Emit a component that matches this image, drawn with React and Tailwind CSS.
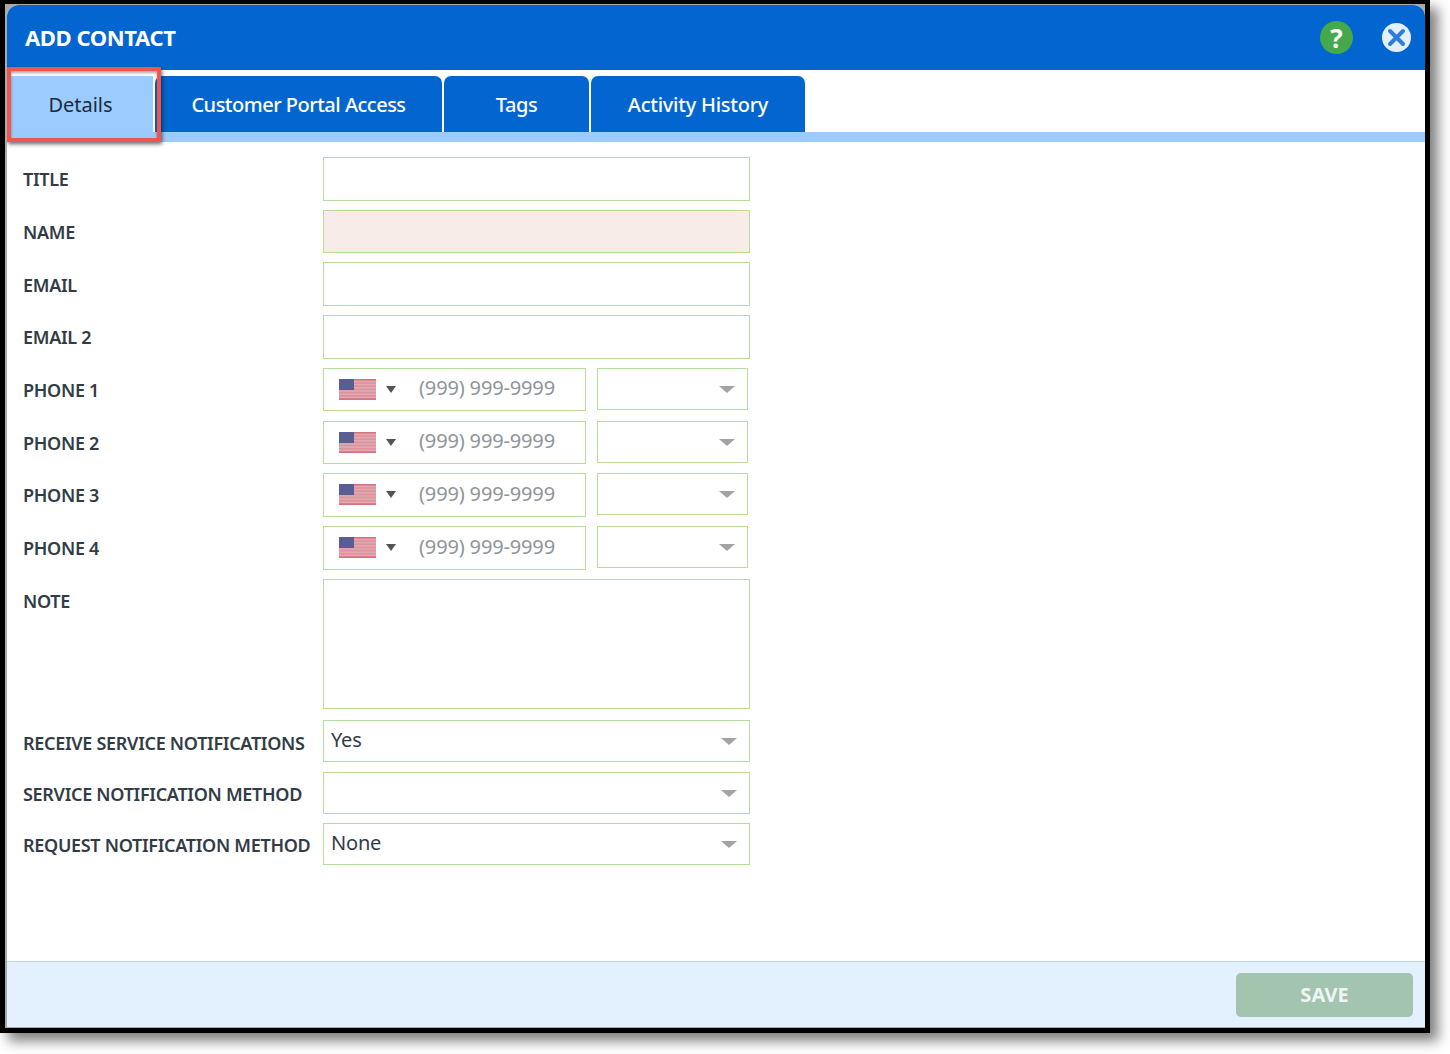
const font = "font-['Noto_Sans',sans-serif]";

function Flag() {
  return (
    <svg width="37" height="21" viewBox="0 0 37 21" className="shrink-0">
      <rect width="37" height="21" fill="#e3a8b0" />
      <rect y="0" width="37" height="1.6" fill="#d5737f" />
      <rect y="3.2" width="37" height="1.6" fill="#dc939d" />
      <rect y="6.4" width="37" height="1.6" fill="#dc939d" />
      <rect y="9.6" width="37" height="1.6" fill="#dc939d" />
      <rect y="12.8" width="37" height="1.6" fill="#dc939d" />
      <rect y="16" width="37" height="1.6" fill="#dc939d" />
      <rect y="19.2" width="37" height="1.8" fill="#d5737f" />
      <rect width="15" height="11" fill="#5a5d92" />
    </svg>
  );
}

function Caret() {
  return <span className="w-0 h-0 border-x-[8px] border-x-transparent border-t-[7px] border-t-[#a3a3a3]" />;
}

function Row({ label, height, gap, labelTop, children }) {
  return (
    <div className={`flex ${height} ${gap}`}>
      <div className={`w-[316px] shrink-0 pl-4 ${labelTop || "pt-[10px]"} text-[18px] leading-[24px] font-semibold text-[#323c46] whitespace-nowrap tracking-[-0.3px]`}>{label}</div>
      {children}
    </div>
  );
}

function TextBox({ className }) {
  return <div className={`w-[427px] h-full border border-[#b5dd9c] ${className || "bg-white"}`} />;
}

function PhoneRow({ label, gap, boxHeight }) {
  return (
    <Row label={label} height="h-[44px]" gap={gap}>
      <div className="flex items-start">
        <div className={`w-[263px] ${boxHeight} border border-[#b5dd9c] flex items-center pl-[15px] pb-[1px]`}>
          <Flag />
          <span className="ml-[10px] w-0 h-0 border-x-[5px] border-x-transparent border-t-[7px] border-t-[#555555]" />
          <span className="ml-[23px] -mt-[2px] text-[20px] tracking-[-0.15px] text-[#8f9599]">(999) 999-9999</span>
        </div>
        <div className="ml-[11px] w-[151px] h-[42px] border border-[#b5dd9c] flex items-center justify-end pr-[12px]">
          <Caret />
        </div>
      </div>
    </Row>
  );
}

function SelectRow({ label, value, gap, labelTop }) {
  return (
    <Row label={label} height="h-[42px]" gap={gap} labelTop={labelTop}>
      <div className="w-[427px] h-[42px] border border-[#b5dd9c] flex items-center justify-between pl-[7px] pr-[12px]">
        <span className="text-[20px] tracking-[-0.2px] text-[#323c46] -mt-[3px]">{value}</span>
        <Caret />
      </div>
    </Row>
  );
}

export default function App() {
  const tabs = [
    { name: "Customer Portal Access", w: "w-[287px]", track: "tracking-[-0.5px]" },
    { name: "Tags", w: "w-[145px]", track: "tracking-[-0.4px]" },
    { name: "Activity History", w: "w-[214px]", track: "tracking-[-0.25px]" },
  ];

  return (
    <div className={`w-[1450px] h-[1054px] bg-white overflow-hidden ${font}`}>
      <div className="w-[1430px] h-[1033px] bg-black pt-[4px] pl-[5px] pr-[5px] pb-[5px] shadow-[8px_8px_12px_rgba(0,0,0,0.5)]">
        <div className="h-full bg-[#a9aca6] pl-[2px] pt-[1px] pb-[1px]">
          <div className="relative h-full bg-white rounded-tl-[12px] rounded-tr-[12px] flex flex-col overflow-hidden">
            <div className="h-[65px] shrink-0 bg-[#0366d0] flex items-center justify-between pl-[18px] pr-[14px]">
              <span className="text-[22px] font-bold text-white tracking-[-0.4px]">ADD CONTACT</span>
              <div className="flex items-center gap-[29px]">
                <span className="w-[33px] h-[33px] rounded-full bg-[#45a84a] flex items-center justify-center text-white text-[26px] font-bold leading-none">?</span>
                <svg width="29" height="29" viewBox="0 0 29 29">
                  <circle cx="14.5" cy="14.5" r="14.5" fill="#e3effb" />
                  <path d="M8 8 L21 21 M21 8 L8 21" stroke="#2b7fd6" strokeWidth="4" strokeLinecap="round" />
                </svg>
              </div>
            </div>

            <div className="h-[6px] shrink-0" />
            <div className="flex h-[56px] shrink-0 pl-[1px]">
              <div className="w-[147px] pt-[2px] flex items-center justify-center bg-[#9ccbff] text-[20px] text-[#1a2a3c] border-r-2 border-white">Details</div>
              <div className="flex">
                {tabs.map((t) => (
                  <div key={t.name} className={`${t.w} ${t.track} mr-[2px] pt-[2px] flex items-center justify-center bg-[#0366d0] rounded-t-[7px] text-[20px] font-medium text-white whitespace-nowrap`}>
                    {t.name}
                  </div>
                ))}
              </div>
            </div>
            <div className="h-[10px] shrink-0 bg-[#9ccbff]" />

            <div className="flex-1 pt-[15px]">
              <Row label="TITLE" height="h-[44px]" gap="mb-[9px]"><TextBox /></Row>
              <Row label="NAME" height="h-[43px]" gap="mb-[9px]"><TextBox className="bg-[#f7ece8]" /></Row>
              <Row label="EMAIL" height="h-[44px]" gap="mb-[9px]" labelTop="pt-[11px]"><TextBox /></Row>
              <Row label="EMAIL 2" height="h-[44px]" gap="mb-[9px]"><TextBox /></Row>
              <PhoneRow label="PHONE 1" gap="mb-[9px]" boxHeight="h-[43px]" />
              <PhoneRow label="PHONE 2" gap="mb-[8px]" boxHeight="h-[43px]" />
              <PhoneRow label="PHONE 3" gap="mb-[9px]" boxHeight="h-[44px]" />
              <PhoneRow label="PHONE 4" gap="mb-[9px]" boxHeight="h-[44px]" />
              <Row label="NOTE" height="h-[130px]" gap="mb-[11px]"><TextBox /></Row>
              <SelectRow label="RECEIVE SERVICE NOTIFICATIONS" value="Yes" gap="mb-[10px]" labelTop="pt-[11px]" />
              <SelectRow label="SERVICE NOTIFICATION METHOD" value="" gap="mb-[9px]" />
              <SelectRow label="REQUEST NOTIFICATION METHOD" value="None" gap="" />
            </div>

            <div className="h-[66px] shrink-0 bg-[#e3f0fd] border-t border-[#b9d6f2] flex items-center justify-end pr-[12px]">
              <div className="w-[177px] h-[44px] rounded-[5px] bg-[#a3c4ae] flex items-center justify-center text-[20px] font-bold text-[#eef5f5]">SAVE</div>
            </div>

            {/* red annotation round the selected tab */}
            <div className="absolute left-0 top-[62px] w-[154px] h-[75px] border-[4px] border-[#f2554d] shadow-[1px_2px_4px_rgba(0,0,0,0.6),inset_0_2px_3px_rgba(0,0,0,0.35)]" />
          </div>
        </div>
      </div>
    </div>
  );
}
